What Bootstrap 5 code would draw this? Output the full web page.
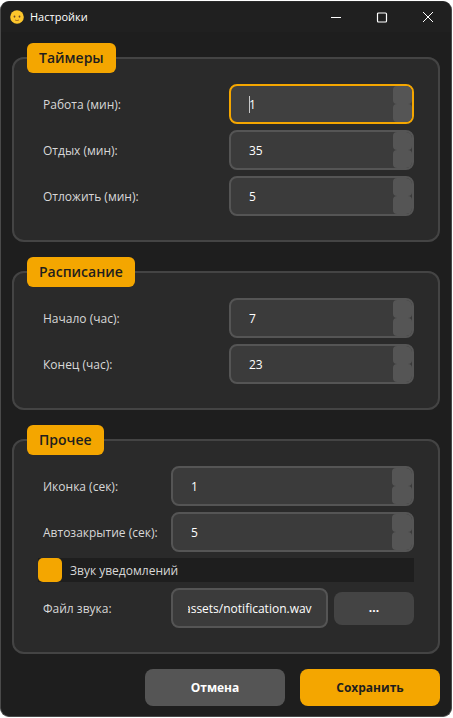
<!DOCTYPE html>
<html lang="ru">
<head>
<meta charset="utf-8">
<meta name="viewport" content="width=device-width, initial-scale=1">
<title>Настройки</title>
<link href="https://cdn.jsdelivr.net/npm/bootstrap@5.3.0/dist/css/bootstrap.min.css" rel="stylesheet">
<style>
  :root { --accent: #f4a600; --line: #555555; }
  body { background: #fff; font-family: "Open Sans", "Noto Sans", sans-serif; font-size: 12px; line-height: 18px; color: #d8d8d8; }
  .app-window { background: #1e1e1e; border: 1px solid #4a4a4a; border-top-color: #2a2a2a; border-radius: 9px; margin: 1px 1px 0 0; overflow: hidden; }
  .title-bar { background: #202020; height: 30px; color: #fff; padding-left: 9px; }
  .title-bar h1 { font-size: 11px; line-height: 18px; font-weight: 400; margin: 0 auto 0 6px; }
  .win-btn { width: 46px; height: 30px; background: none; border: 0; padding: 0; color: #fff; }
  .window-body { padding: 11px 11px 10px; gap: 15px; }
  .group { background: #2a2a2a; border: 2px solid #444; border-radius: 12px; padding: 11px 24px 24px; margin: 0; }
  .group legend { float: none; width: auto; margin: 0 0 0 -11px; height: 30px; padding: 0 12px; line-height: 30px; font-size: 14px; font-weight: 600; background: var(--accent); color: #1e1e1e; border-radius: 6px; }
  .form-grid { display: grid; gap: 6px; grid-template-columns: 1fr 1fr; }
  .form-grid.wide { grid-template-columns: 127px 1fr; }
  .form-grid label { padding: 2px 0 0 5px; align-self: center; white-space: nowrap; }
  .field { height: 40px; background: #3b3b3b; border: 2px solid var(--line); border-radius: 8px; overflow: hidden; }
  .field input { background: none; border: 0; outline: 0; min-width: 0; color: #fff; padding: 2px 0 0 18px; font-size: 12px; appearance: textfield; -moz-appearance: textfield; }
  .field input::-webkit-inner-spin-button { appearance: none; -webkit-appearance: none; margin: 0; }
  .field.active { background: #404040; border-color: var(--accent); }
  .caret { position: absolute; left: 18px; top: 10px; width: 1px; height: 17px; background: #c8c8c8; }
  .field.path input { padding: 2px 0 0; margin: 0 14px 0 15px; }
  .steps { width: 20px; }
  .steps button { flex: 1; border: 0; padding: 0; background: var(--line); border-radius: 4px; }
  .check-row { grid-column: 1 / -1; background: #1e1e1e; }
  .check-row input { appearance: none; width: 24px; height: 24px; border-radius: 5px; background: #555; margin: 0; }
  .check-row input:checked { background: var(--accent); }
  .check-row label { padding-left: 8px; }
  .file-row { gap: 6px; }
  .browse { width: 80px; height: 33px; background: #444; border: 0; border-radius: 8px; color: #fff; font-weight: 700; font-size: 12px; }
  .actions { gap: 15px; }
  .action { width: 140px; height: 37px; border: 0; border-radius: 8px; font-size: 12px; font-weight: 700; padding: 0; }
  .action.cancel { background: #555; color: #fff; }
  .action.save { background: var(--accent); color: #1e1e1e; }
</style>
</head>
<body>
<main class="app-window">
  <header class="title-bar d-flex align-items-center">
    <svg width="14" height="14" viewBox="0 0 14 14" aria-hidden="true"><circle cx="7" cy="7" r="6.8" fill="#fcc62c"/><ellipse cx="4.5" cy="6.6" rx=".9" ry="1.1" fill="#69452a"/><ellipse cx="9.5" cy="6.6" rx=".9" ry="1.1" fill="#69452a"/><path d="M5 10q2 1.3 4 0" fill="none" stroke="#a36a22" stroke-width=".9"/></svg>
    <h1>Настройки</h1>
    <button class="win-btn" aria-label="Свернуть"><svg width="12" height="12" viewBox="0 0 12 12" fill="none" stroke="currentColor"><path d="M1 5.5h10"/></svg></button>
    <button class="win-btn" aria-label="Развернуть"><svg width="12" height="12" viewBox="0 0 12 12" fill="none" stroke="currentColor" stroke-width="1.2"><rect x="1.5" y="1" width="9" height="9" rx="1"/></svg></button>
    <button class="win-btn" aria-label="Закрыть"><svg width="12" height="12" viewBox="0 0 12 12" fill="none" stroke="currentColor"><path d="M1 0l10 10M11 0L1 10"/></svg></button>
  </header>
  <form class="window-body d-flex flex-column">
    <fieldset class="group">
      <legend>Таймеры</legend>
      <div class="form-grid">
        <label for="work">Работа (мин):</label>
        <div class="field active d-flex position-relative"><input class="flex-fill" id="work" type="number" value="1"><span class="caret"></span><div class="steps d-flex flex-column"><button type="button" aria-label="Больше"></button><button type="button" aria-label="Меньше"></button></div></div>
        <label for="rest">Отдых (мин):</label>
        <div class="field d-flex"><input class="flex-fill" id="rest" type="number" value="35"><div class="steps d-flex flex-column"><button type="button" aria-label="Больше"></button><button type="button" aria-label="Меньше"></button></div></div>
        <label for="snooze">Отложить (мин):</label>
        <div class="field d-flex"><input class="flex-fill" id="snooze" type="number" value="5"><div class="steps d-flex flex-column"><button type="button" aria-label="Больше"></button><button type="button" aria-label="Меньше"></button></div></div>
      </div>
    </fieldset>
    <fieldset class="group">
      <legend>Расписание</legend>
      <div class="form-grid">
        <label for="start">Начало (час):</label>
        <div class="field d-flex"><input class="flex-fill" id="start" type="number" value="7"><div class="steps d-flex flex-column"><button type="button" aria-label="Больше"></button><button type="button" aria-label="Меньше"></button></div></div>
        <label for="end">Конец (час):</label>
        <div class="field d-flex"><input class="flex-fill" id="end" type="number" value="23"><div class="steps d-flex flex-column"><button type="button" aria-label="Больше"></button><button type="button" aria-label="Меньше"></button></div></div>
      </div>
    </fieldset>
    <fieldset class="group">
      <legend>Прочее</legend>
      <div class="form-grid wide">
        <label for="icon">Иконка (сек):</label>
        <div class="field d-flex"><input class="flex-fill" id="icon" type="number" value="1"><div class="steps d-flex flex-column"><button type="button" aria-label="Больше"></button><button type="button" aria-label="Меньше"></button></div></div>
        <label for="autoclose">Автозакрытие (сек):</label>
        <div class="field d-flex"><input class="flex-fill" id="autoclose" type="number" value="5"><div class="steps d-flex flex-column"><button type="button" aria-label="Больше"></button><button type="button" aria-label="Меньше"></button></div></div>
        <div class="check-row d-flex align-items-center"><input type="checkbox" id="sound" checked><label for="sound">Звук уведомлений</label></div>
        <label for="file">Файл звука:</label>
        <div class="file-row d-flex align-items-center"><div class="field path d-flex flex-fill"><input class="w-100" id="file" type="text" value="assets/notification.wav"></div><button type="button" class="browse flex-shrink-0">...</button></div>
      </div>
    </fieldset>
    <div class="actions d-flex justify-content-end">
      <button type="button" class="action cancel">Отмена</button>
      <button type="submit" class="action save">Сохранить</button>
    </div>
  </form>
</main>
<script src="https://cdn.jsdelivr.net/npm/bootstrap@5.3.0/dist/js/bootstrap.bundle.min.js"></script>
<script>
  const file = document.getElementById('file');
  file.scrollLeft = file.scrollWidth;
</script>
</body>
</html>
